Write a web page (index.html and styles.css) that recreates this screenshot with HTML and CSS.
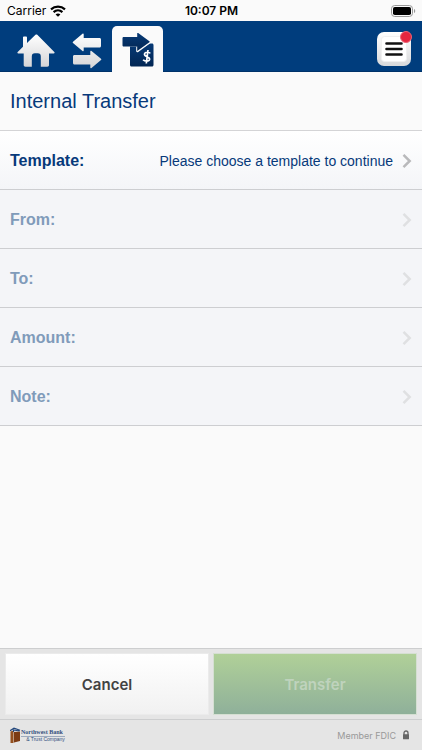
FILE: index.html
```
<!DOCTYPE html>
<html lang="en">
<head>
  <meta charset="UTF-8" />
  <meta name="viewport" content="width=device-width, initial-scale=1.0">
  <title>Internal Transfer</title>
  <link rel="stylesheet" href="styles.css">
</head>
<body>
  <div class="status-bar">
    <div class="carrier">
      <span>Carrier</span>
      <svg class="wifi" width="16" height="12" viewBox="0 0 16 12" fill="none" stroke="#000" stroke-width="2.2">
        <path d="M1 4.400C5 .7 11 .7 15 4.400M3.600 7.100c2.500-2.300 6.300-2.300 8.800 0" />
        <path d="M8 11.800L5.600 9.400c1.300-1.200 3.500-1.200 4.800 0z" fill="#000" stroke="none" />
      </svg>
    </div>
    <span class="clock">10:07 PM</span>
    <svg class="battery" width="25" height="12" viewBox="0 0 25 12">
      <rect x=".5" y=".5" width="21" height="11" rx="3.2" fill="none" stroke="#999" />
      <rect x="2" y="2" width="18" height="8" rx="1.8" fill="#000" />
      <path d="M23 4c1.600.4 1.600 3.600 0 4z" fill="#999" />
    </svg>
  </div>

  <nav class="nav">
    <a class="tab" href="#home" aria-label="Home">
      <svg width="38" height="34" viewBox="0 0 38 34">
        <defs>
          <linearGradient id="silver" x1="0" y1="0" x2="0" y2="1">
            <stop offset="0" stop-color="#fff" />
            <stop offset="1" stop-color="#d5d5d7" />
          </linearGradient>
        </defs>
        <path fill="url(#silver)" d="M18.500.8c.6-.5 1.200-.5 1.800 0L37.300 18c.6.7.3 1.500-.6 1.500H32V31c0 1-.6 1.700-1.700 1.700h-6.500V22.500c0-2-1-3.200-3-3.200h-3c-2 0-3 1.200-3 3.200v10.200H8.500c-1.200 0-1.800-.7-1.800-1.700V19.500H1.300c-.9 0-1.200-.8-.6-1.500L6 12.800V3.500c0-.6.300-.9.900-.9h2.200c.6 0 .9.300.9.900v5.400z" />
      </svg>
    </a>
    <a class="tab" href="#transfers" aria-label="Transfers">
      <svg width="30" height="36" viewBox="0 0 30 36">
        <path fill="url(#silver)" d="M10.500.8c.6-.5 1.200-.2 1.200.5v3.600h15.800c.9 0 1.500.6 1.500 1.500V13c0 .9-.6 1.500-1.500 1.500H11.700v3c0 .8-.6 1-1.200.5L1 10c-.5-.4-.5-.9 0-1.300zM19.500 17.900c-.6-.5-1.200-.2-1.200.5V22H2.500C1.600 22 1 22.600 1 23.500V30c0 .9.600 1.500 1.500 1.500h15.800v3c0 .8.6 1 1.200.5l9.500-8c.5-.4.5-.9 0-1.300z" />
      </svg>
    </a>
    <a class="tab active" href="#internal" aria-label="Internal transfer">
      <svg width="32" height="34" viewBox="0 0 32 34">
        <defs>
          <linearGradient id="navy" x1="0" y1="0" x2="0" y2="1">
            <stop offset="0" stop-color="#073a76" />
            <stop offset="1" stop-color="#022653" />
          </linearGradient>
        </defs>
        <path fill="url(#navy)" d="M8 13.500h15l4.500-3H30c.9 0 1.500.6 1.500 1.500v20c0 .9-.6 1.500-1.500 1.500H9.500c-.9 0-1.500-.6-1.500-1.500z" />
        <path fill="none" stroke="#fafafa" stroke-width="2.600" stroke-linejoin="round" d="M15.500 13.500v4.500L27.700 9" />
        <path fill="url(#navy)" d="M1.800 4h13.400V.5c0-.6.500-.8 1-.5l11.200 8.200c.4.300.4.700 0 1L15.200 18v-4.500H1.800c-.8 0-1.300-.5-1.300-1.300V5.300c0-.8.5-1.300 1.300-1.300z" />
        <path fill="none" stroke="#fff" stroke-width="1.700" d="M28.300 20.400c-1-1.500-5.400-1.800-5.800.7-.4 2.900 5.500 2.300 5.100 5.300-.4 2.400-4.900 2.300-6.500.4M26 17l-1.700 13.500" />
      </svg>
    </a>
    <button class="menu-button" type="button" aria-label="Menu">
      <svg width="26" height="26" viewBox="0 0 26 26">
        <rect x=".5" y=".5" width="25" height="25" rx="3" fill="#fff" stroke="#f0f0f0" />
        <path d="M5.500 7.500h15M5.500 13h15M5.500 18.500h15" stroke="#111" stroke-width="2.600" stroke-linecap="round" />
      </svg>
      <span class="badge"></span>
    </button>
  </nav>

  <main>
    <h1>Internal Transfer</h1>
    <button class="row template" type="button">
      <span class="label">Template:</span>
      <span class="value">Please choose a template to continue</span>
      <svg class="chevron" width="10" height="16" viewBox="0 0 10 16"><path d="M1.500 1.800L7.700 8l-6.200 6.200" /></svg>
    </button>
    <button class="row" type="button" disabled>
      <span class="label">From:</span>
      <svg class="chevron" width="10" height="16" viewBox="0 0 10 16"><path d="M1.500 1.800L7.700 8l-6.200 6.200" /></svg>
    </button>
    <button class="row" type="button" disabled>
      <span class="label">To:</span>
      <svg class="chevron" width="10" height="16" viewBox="0 0 10 16"><path d="M1.500 1.800L7.700 8l-6.200 6.200" /></svg>
    </button>
    <button class="row" type="button" disabled>
      <span class="label">Amount:</span>
      <svg class="chevron" width="10" height="16" viewBox="0 0 10 16"><path d="M1.500 1.800L7.700 8l-6.200 6.200" /></svg>
    </button>
    <button class="row" type="button" disabled>
      <span class="label">Note:</span>
      <svg class="chevron" width="10" height="16" viewBox="0 0 10 16"><path d="M1.500 1.800L7.700 8l-6.200 6.200" /></svg>
    </button>
  </main>

  <div class="actions">
    <button class="cancel" type="button">Cancel</button>
    <button class="transfer" type="button" disabled>Transfer</button>
  </div>

  <footer>
    <div class="logo">
      <svg width="11" height="17" viewBox="0 0 11 17">
        <path fill="#94501f" d="M.5 4.500l3-1V16h-3z" />
        <path fill="#7d3b13" d="M4 5l6-.5v9.500L4 15.500z" />
        <path fill="none" stroke="#23477c" stroke-width="1.200" d="M0 3.800L4 1.200l6 2M3.500 5V3l6 1" />
      </svg>
      <div class="logo-text">
        <span class="logo-name">Northwest Bank</span>
        <span class="logo-sub">&amp; Trust Company</span>
      </div>
    </div>
    <div class="member">
      <span>Member FDIC</span>
      <svg width="8" height="10" viewBox="0 0 8 10">
        <path d="M2 5V3c0-2.700 4-2.700 4 0v2" fill="none" stroke="#666" stroke-width="1.300" />
        <rect x="1" y="4.300" width="6" height="5" rx=".5" fill="#666" />
      </svg>
    </div>
  </footer>
</body>
</html>
```
FILE: styles.css
```
* {
  box-sizing: border-box;
}
body {
  margin: 0;
  min-height: 100vh;
  display: flex;
  flex-direction: column;
  background: #fafafa;
  font-family: "Liberation Sans", Arial, sans-serif;
  color: #07397a;
}
button {
  font-family: inherit;
  border: none;
  margin: 0;
  cursor: pointer;
}
svg {
  display: block;
  flex: none;
}

.status-bar {
  height: 21px;
  padding: 0 6px 0 7px;
  display: grid;
  grid-template-columns: 1fr auto 1fr;
  align-items: center;
  font-family: Inter, sans-serif;
  font-size: 12px;
  color: #000;
}
.carrier {
  display: flex;
  align-items: center;
  gap: 4px;
}
.clock {
  font-weight: 600;
}
.battery {
  justify-self: end;
}

.nav {
  height: 51px;
  padding: 5px 11px 0 10px;
  display: flex;
  background: #003d7d;
  border-bottom: 1px solid #003269;
}
.tab {
  width: 51px;
  display: flex;
  align-items: center;
  justify-content: center;
  padding-top: 4px;
}
.active {
  background: #fafafa;
  border-radius: 5px 5px 0 0;
  margin-bottom: -1px;
  padding-top: 2px;
}
.menu-button {
  position: relative;
  width: 34px;
  height: 34px;
  margin: 6px 0 0 auto;
  padding: 0;
  display: flex;
  align-items: center;
  justify-content: center;
  background: linear-gradient(#fff, #d8d9db);
  border-radius: 7px;
}
.badge {
  position: absolute;
  top: -1px;
  right: -1px;
  width: 12px;
  height: 12px;
  border-radius: 50%;
  background: #e5263f;
  border: 1px solid #eb6474;
}

main {
  flex: 1;
}
h1 {
  margin: 0;
  height: 59px;
  line-height: 59px;
  padding-left: 10px;
  font-size: 20px;
  font-weight: normal;
  border-bottom: 1px solid #d4d4d6;
}
.row {
  width: 100%;
  height: 59px;
  padding: 2px 10px 0;
  display: flex;
  align-items: center;
  background: #f4f5f8;
  border-bottom: 1px solid #cdced1;
  color: #07397a;
  text-align: left;
}
.row:disabled {
  color: #809bba;
}
.label {
  flex: 1;
  font-size: 16px;
  font-weight: bold;
}
.value {
  font-size: 14px;
  margin-right: 9px;
}
.template {
  background: linear-gradient(#fff, #f4f5f8);
}
.chevron {
  fill: none;
  stroke: #b9b9bb;
  stroke-width: 2.5;
}
.row:disabled .chevron {
  stroke: #dfe0e2;
}

.actions {
  height: 71px;
  padding: 4px 5px;
  display: grid;
  grid-template-columns: 1fr 1fr;
  gap: 4px;
  background: #e5e5e5;
  border-top: 1px solid #cdcecf;
}
.actions button {
  font-family: Inter, sans-serif;
  font-size: 15px;
  font-weight: 600;
}
.cancel {
  background: linear-gradient(#fff, #f1f1f1);
  border: 1px solid #ebebeb;
  color: #424242;
}
.transfer {
  background: linear-gradient(#b0d098, #8fb09a);
  border: 1px solid #d5dfd2;
  color: #bfd3bd;
}

footer {
  height: 31px;
  padding: 0 12px 0 10px;
  display: flex;
  align-items: center;
  justify-content: space-between;
  background: #e5e5e5;
  border-top: 1px solid #cdcecf;
}
.logo {
  display: flex;
  align-items: center;
}
.logo-text {
  display: flex;
  flex-direction: column;
  font-family: "Liberation Serif", serif;
  text-align: right;
  color: #31507e;
}
.logo-name {
  font-size: 6px;
  line-height: 7px;
  font-weight: bold;
  padding-right: 2px;
  border-bottom: 1px solid #9daabd;
}
.logo-sub {
  font-family: "Liberation Sans", sans-serif;
  font-size: 5px;
  line-height: 5px;
}
.member {
  display: flex;
  align-items: center;
  gap: 6px;
  font-family: Inter, sans-serif;
  font-size: 9px;
  color: #999;
}
```
